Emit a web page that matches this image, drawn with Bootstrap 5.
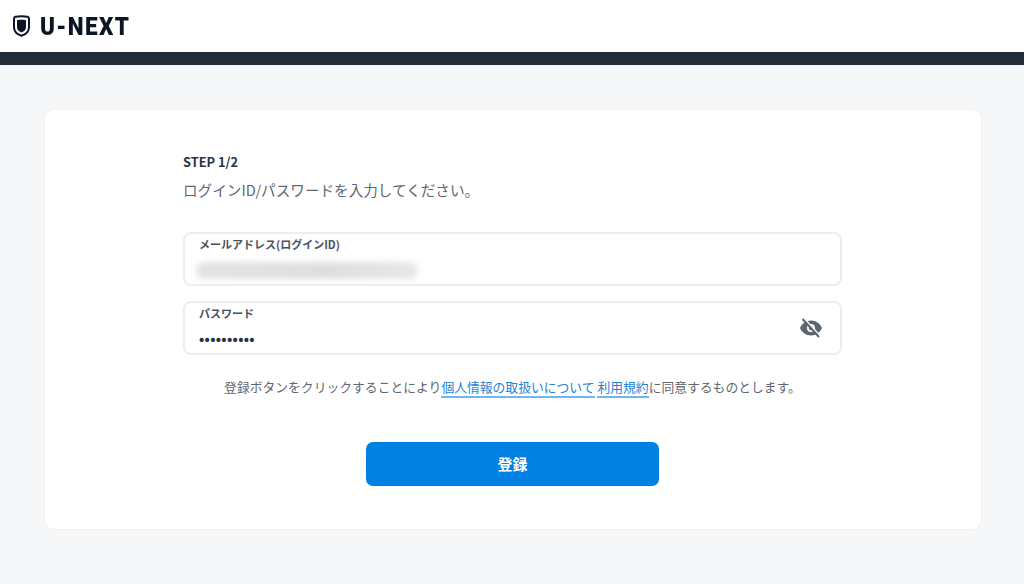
<!DOCTYPE html>
<html lang="ja">
<head>
<meta charset="utf-8">
<title>U-NEXT</title>
<link href="https://cdn.jsdelivr.net/npm/bootstrap@5.3.0/dist/css/bootstrap.min.css" rel="stylesheet">
<style>
html,body{height:584px;overflow:hidden}
body{background:#f5f7f8;font-family:"Noto Sans CJK JP","Noto Sans",sans-serif;color:#1e2a38}
.topbar{height:52px;background:#fff;padding-left:12px}
.brandword{display:inline-block;font-family:"Roboto","Liberation Sans",sans-serif;font-weight:900;font-size:26.5px;letter-spacing:1.6px;color:#0b1523;line-height:1;transform:scaleX(.85);transform-origin:left center;margin-left:1px}
.stripe{height:13px;background:#232d3a}
.sheet{margin:44px 42px 0 44px;height:421px;background:#fff;border:1px solid #f0f2f3;border-radius:10px;padding:42px 139px 0 138px}
.stepline{font-size:12.8px;font-weight:700;line-height:20px;color:#2a3441}
.lede{font-size:14.6px;line-height:20px;color:#5f6770;margin-top:8px;margin-bottom:32px}
.fieldbox{height:54px;border:2px solid #ebedef;border-radius:8px;padding:2px 17px 0 14px;margin-bottom:15px}
.fieldname{font-size:11px;font-weight:700;line-height:16px;color:#49525d}
.smear{width:222px;height:17px;margin-top:10px;margin-left:-3px;background:linear-gradient(90deg,#e2e3e4,#dddedf 60%,#e6e7e8);border-radius:9px;filter:blur(3px)}
.dots{font-size:14px;font-weight:700;line-height:20px;margin-top:7px;letter-spacing:.3px;color:#2a3441}
.eyeicon{margin-top:13px}
.consent{font-size:12.8px;line-height:20px;color:#5f6770;margin-top:22px}
.consent a{color:#1f82d6;text-decoration:none;border-bottom:2px solid #6fb5ee}
.submitbtn{width:293px;height:44px;margin-top:45px;background:#0080e0;border:0;border-radius:7px;color:#fff;font-size:15px;font-weight:700}
.submitbtn:hover{background:#0080e0;color:#fff}
</style>
</head>
<body>
<header class="topbar d-flex align-items-center gap-2">
<svg width="19" height="22" viewBox="0 0 19 22" aria-hidden="true"><path d="M2 3.500C2 2.500 2.500 2 3.500 1.800 6.800 1.200 12.200 1.200 15.500 1.800 16.500 2 17 2.500 17 3.500V12C17 17 13.500 19.600 9.500 20.800 5.500 19.600 2 17 2 12Z" fill="#fff" stroke="#0b1523" stroke-width="2"/><path d="M5 5.200C6.500 4.800 8 4.700 9.500 4.700S12.500 4.800 14 5.200V12C14 14.800 12 16.500 9.500 17.400 7 16.500 5 14.800 5 12Z" fill="#0b1523"/></svg>
<span class="brandword">U-NEXT</span>
</header>
<div class="stripe"></div>
<main class="sheet">
<div class="stepline">STEP 1/2</div>
<p class="lede">ログインID/パスワードを入力してください。</p>
<div class="fieldbox">
<div class="fieldname">メールアドレス(ログインID)</div>
<div class="smear"></div>
</div>
<div class="fieldbox d-flex justify-content-between align-items-start">
<div>
<div class="fieldname">パスワード</div>
<div class="dots">••••••••••</div>
</div>
<svg class="eyeicon" width="24" height="20" viewBox="0 0 24 20" aria-hidden="true"><path fill-rule="evenodd" d="M12 2.500C6.800 2.500 2.800 5.800 1 10c1.800 4.200 5.800 7.500 11 7.500s9.200-3.300 11-7.500c-1.800-4.200-5.800-7.500-11-7.500Zm0 3.500a4 4 0 1 1 0 8 4 4 0 0 1 0-8Z" fill="#5c666f"/><circle cx="12" cy="10" r="2.200" fill="#5c666f"/><path d="M4.800 0 21.300 18" stroke="#fff" stroke-width="1.500"/><path d="M3.500 1 20 19" stroke="#5c666f" stroke-width="2"/></svg>
</div>
<p class="consent text-center mb-0">登録ボタンをクリックすることにより<a href="#">個人情報の取扱いについて</a> <a href="#">利用規約</a>に同意するものとします。</p>
<div class="text-center"><button type="button" class="btn submitbtn">登録</button></div>
</main>
<script src="https://cdn.jsdelivr.net/npm/bootstrap@5.3.0/dist/js/bootstrap.bundle.min.js"></script>
</body>
</html>
